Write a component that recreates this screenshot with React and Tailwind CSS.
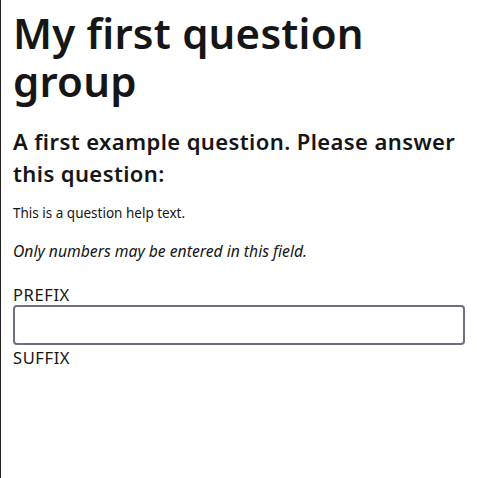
export default function App() {
  return (
    <div className="min-h-[478px] border-l border-[#222] bg-white px-3 pt-[9px] text-[#161616]" style={{ fontFamily: '"Noto Sans", sans-serif' }}>
      <h1 className="text-[42px] font-semibold leading-[48px] tracking-[0.2px]">My first question group</h1>
      <h2 className="mt-[20px] text-[22px] font-semibold leading-[32px] tracking-[0.4px]">
        A first example question. Please answer this question:
      </h2>
      <p className="mt-[14px] text-[13.5px] leading-5">This is a question help text.</p>
      <p className="mt-[16px] text-[15.7px] italic leading-6">Only numbers may be entered in this field.</p>
      <div className="mt-[22px]">
        <label className="block text-[16.5px] leading-5 tracking-[0.6px]">PREFIX</label>
        <input type="text" className="block h-10 w-full rounded border-2 border-[#6c7181] bg-white" />
        <div className="mt-[3px] text-[16.5px] leading-[20px] tracking-[0.6px]">SUFFIX</div>
      </div>
    </div>
  )
}
